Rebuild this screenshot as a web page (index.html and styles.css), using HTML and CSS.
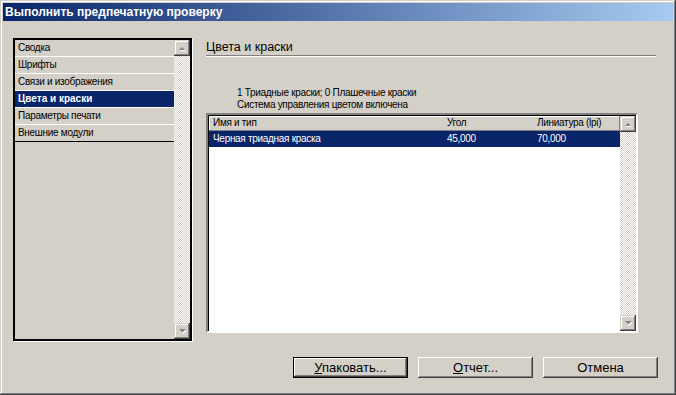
FILE: index.html
```html
<!DOCTYPE html>
<html lang="ru">
<head>
<meta charset="utf-8">
<title>Выполнить предпечатную проверку</title>
<link rel="stylesheet" href="styles.css">
</head>
<body>
<div class="window">
  <div class="titlebar"><span class="title">Выполнить предпечатную проверку</span></div>
  <div class="body">
    <div class="main">
      <div class="navlist">
        <ul class="items">
          <li class="item">Сводка</li>
          <li class="item">Шрифты</li>
          <li class="item">Связи и изображения</li>
          <li class="item selected">Цвета и краски</li>
          <li class="item">Параметры печати</li>
          <li class="item last">Внешние модули</li>
        </ul>
        <div class="vscroll">
          <div class="sbtn"><svg width="7" height="5" viewBox="0 0 7 5"><polygon points="4,2 1,5 7,5" fill="#fff"/><polygon points="3,1 0,4 7,4 6,4 3,1" fill="#808080"/></svg></div>
          <div class="track"></div>
          <div class="sbtn"><svg width="7" height="5" viewBox="0 0 7 5"><polygon points="1,1 8,1 4,5" fill="#fff"/><polygon points="0,0 7,0 3.5,3.5" fill="#808080"/></svg></div>
        </div>
      </div>
      <div class="panel">
        <div class="panel-head">Цвета и краски</div>
        <div class="info">
          <div>1 Триадные краски; 0 Плашечные краски</div>
          <div>Система управления цветом включена</div>
        </div>
        <div class="table">
          <div class="grid">
            <div class="row thead">
              <span class="c1">Имя и тип</span><span class="c2">Угол</span><span class="c3">Линиатура (lpi)</span>
            </div>
            <div class="row selrow">
              <span class="c1">Черная триадная краска</span><span class="c2">45,000</span><span class="c3">70,000</span>
            </div>
          </div>
          <div class="vscroll">
            <div class="sbtn"><svg width="7" height="5" viewBox="0 0 7 5"><polygon points="4,2 1,5 7,5" fill="#fff"/><polygon points="3,1 0,4 7,4 6,4 3,1" fill="#808080"/></svg></div>
            <div class="track"></div>
            <div class="sbtn"><svg width="7" height="5" viewBox="0 0 7 5"><polygon points="1,1 8,1 4,5" fill="#fff"/><polygon points="0,0 7,0 3.5,3.5" fill="#808080"/></svg></div>
          </div>
        </div>
      </div>
    </div>
    <div class="buttons">
      <button class="btn default"><u>У</u>паковать...</button>
      <button class="btn"><u>О</u>тчет...</button>
      <button class="btn">Отмена</button>
    </div>
  </div>
</div>
</body>
</html>
```

FILE: styles.css
```css
* { box-sizing: border-box; }
html, body { margin: 0; padding: 0; }
body {
  width: 676px;
  height: 395px;
  overflow: hidden;
  background: #d4d0c8;
  font-family: "Liberation Sans", Arial, sans-serif;
  font-size: 10px;
  letter-spacing: -0.3px;
  color: #000;
}
.window {
  width: 676px;
  height: 395px;
  padding: 3px;
  background: #d4d0c8;
  box-shadow: inset -1px -1px #404040, inset 1px 1px #d4d0c8, inset -2px -2px #808080, inset 2px 2px #fff;
}
.titlebar {
  height: 18px;
  background: linear-gradient(to right, #0a246a, #a6caf0);
  padding-left: 2px;
  padding-bottom: 1px;
  display: flex;
  align-items: center;
}
.title {
  color: #fff;
  font-weight: bold;
  font-size: 12px;
  letter-spacing: 0;
}
.body {
  padding: 17px 15px 0 10px;
}
.main {
  display: flex;
  gap: 14px;
  height: 304px;
}
.navlist {
  width: 179px;
  height: 303px;
  border: 2px solid #000;
  box-shadow: 1px 1px 0 #fff;
  display: flex;
  background: #d4d0c8;
}
.items {
  list-style: none;
  margin: 0;
  padding: 0;
  flex: 1;
}
.item {
  height: 17px;
  line-height: 15px;
  padding-left: 3px;
  border-bottom: 1px solid #fff;
  white-space: nowrap;
}
.item.last { border-bottom-color: #000; }
.item.selected {
  background: #0a246a;
  color: #fff;
  font-weight: bold;
  letter-spacing: 0;
}
.vscroll {
  width: 16px;
  display: flex;
  flex-direction: column;
}
.sbtn {
  height: 16px;
  background: #d4d0c8;
  box-shadow: inset -1px -1px #404040, inset 1px 1px #d4d0c8, inset -2px -2px #808080, inset 2px 2px #fff;
  display: flex;
  align-items: center;
  justify-content: center;
}
.sbtn svg { display: block; }
.track {
  flex: 1;
  background: repeating-conic-gradient(#d4d0c8 0 25%, #fff 0 50%) 0 0 / 2px 2px;
}
.panel {
  width: 451px;
}
.panel-head {
  margin-top: 1px;
  width: 450px;
  line-height: 16px;
  font-size: 12.5px;
  letter-spacing: 0;
  border-bottom: 1px solid #808080;
  box-shadow: 0 1px 0 #fff;
}
.info {
  margin-top: 31px;
  padding-left: 31px;
  line-height: 12px;
}
.table {
  margin-top: 2px;
  width: 432px;
  height: 220px;
  display: flex;
  background: #fff;
  border: 2px solid;
  border-color: #808080 #fff #fff #808080;
  box-shadow: inset 1px 1px #000;
  padding: 1px 0 0 1px;
}
.table .vscroll { height: 100%; }
.grid {
  flex: 1;
}
.row {
  display: flex;
  white-space: nowrap;
}
.row span { padding-left: 4px; }
.c1 { width: 234px; }
.c2 { width: 90px; }
.c3 { flex: 1; }
.thead {
  height: 15px;
  line-height: 14px;
  background: #d4d0c8;
  box-shadow: inset -1px -1px #808080, inset 1px 1px #fff;
}
.selrow {
  height: 16px;
  line-height: 16px;
  background: #0a246a;
  color: #fff;
}
.buttons {
  margin-top: 15px;
  display: flex;
  justify-content: flex-end;
  gap: 10px;
}
.btn {
  width: 115px;
  height: 21px;
  font-family: "Liberation Sans", Arial, sans-serif;
  font-size: 13px;
  letter-spacing: 0;
  color: #000;
  background: #d4d0c8;
  border: none;
  padding: 0;
  box-shadow: inset -1px -1px #404040, inset 1px 1px #fff, inset -2px -2px #808080, inset 2px 2px #d4d0c8;
}
.btn.default {
  border: 1px solid #000;
  box-shadow: inset -1px -1px #404040, inset 1px 1px #fff, inset -2px -2px #808080;
}
```
